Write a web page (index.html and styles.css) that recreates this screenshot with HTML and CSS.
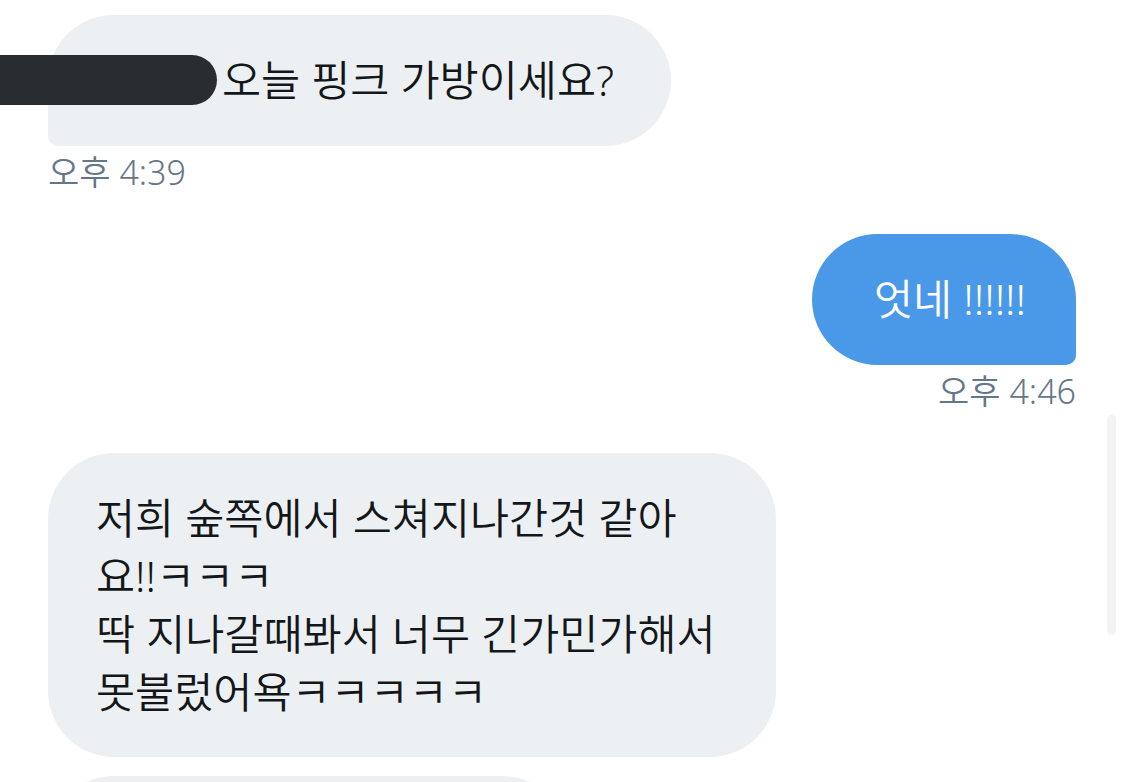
FILE: index.html
```html
<!DOCTYPE html>
<html lang="ko">
<head>
<meta charset="utf-8">
<link rel="stylesheet" href="styles.css">
</head>
<body>
<div class="chat">
  <div class="group in">
    <div class="bubble in first-in last-in">
      <span class="redact"></span>
      <span class="text">오늘 핑크 가방이세요?</span>
    </div>
    <div class="time">오후 4:39</div>
  </div>

  <div class="group out">
    <div class="bubble out last-out">
      <span class="text">엇네 !!!!!!</span>
    </div>
    <div class="time">오후 4:46</div>
  </div>

  <div class="group in">
    <div class="bubble in wide">
      <span class="text">저희 숲쪽에서 스쳐지나간것 같아<br>요!!ㅋㅋㅋ<br>딱 지나갈때봐서 너무 긴가민가해서<br>못불렀어욕ㅋㅋㅋㅋㅋ</span>
    </div>
    <div class="bubble in next"></div>
  </div>
</div>
<div class="scrollbar"></div>
</body>
</html>
```

FILE: styles.css
```css
html, body {
  margin: 0;
  padding: 0;
  background: #ffffff;
  overflow: hidden;
}

body {
  width: 1125px;
  height: 782px;
  position: relative;
  font-family: "Noto Sans", "Noto Sans CJK KR", sans-serif;
  color: #14171a;
}

.chat {
  display: flex;
  flex-direction: column;
  padding: 15px 49px 0 48px;
}

.group {
  display: flex;
  flex-direction: column;
  margin-bottom: 44px;
}

.group.in {
  align-items: flex-start;
}

.group.out {
  align-items: flex-end;
}

.bubble {
  position: relative;
  box-sizing: border-box;
  font-size: 42.5px;
  font-weight: 350;
  line-height: 58px;
  padding: 36px 50px 37px;
  border-radius: 66px;
  white-space: nowrap;
}

.bubble.in {
  background: #ecf0f2;
}

.bubble.out {
  background: #4a99e9;
  color: #ffffff;
  padding-left: 62px;
}

.bubble.first-in {
  padding-left: 174px;
  padding-right: 57px;
}

.bubble.last-in {
  border-bottom-left-radius: 10px;
}

.bubble.last-out {
  border-bottom-right-radius: 10px;
}

.bubble.wide {
  width: 728px;
  padding: 36px 48px;
}

.bubble.next {
  width: 520px;
  height: 200px;
  margin-top: 19px;
}

.redact {
  position: absolute;
  left: -48px;
  top: 40px;
  width: 217px;
  height: 50px;
  background: #292d30;
  border-radius: 0 25px 25px 0;
}

.time {
  font-size: 34px;
  font-weight: 350;
  line-height: 36px;
  color: #657786;
  margin-top: 8px;
}

.scrollbar {
  position: absolute;
  left: 1107px;
  top: 415px;
  width: 9px;
  height: 220px;
  border-radius: 5px;
  background: #f3f3f3;
}
```
